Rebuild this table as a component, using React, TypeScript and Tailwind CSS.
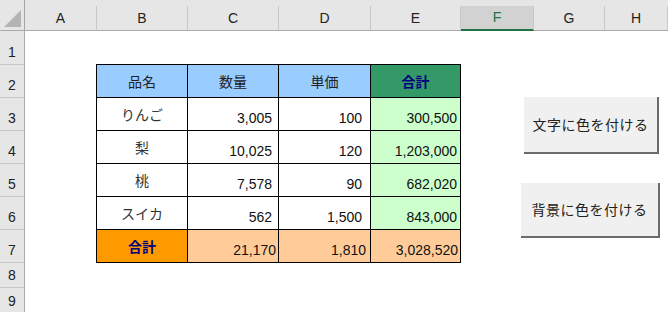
import React from "react";

const font = { fontFamily: '"Liberation Sans", "Noto Sans CJK JP", sans-serif' };

const columns = [
  { label: "A", w: "w-[72px]" },
  { label: "B", w: "w-[91px]" },
  { label: "C", w: "w-[91px]" },
  { label: "D", w: "w-[92px]" },
  { label: "E", w: "w-[90px]" },
  { label: "F", w: "w-[73px]", selected: true },
  { label: "G", w: "w-[71px]" },
  { label: "H", w: "flex-1" },
];

const rowHeights = [
  "h-[34px]",
  "h-[33px]",
  "h-[33px]",
  "h-[33px]",
  "h-[33px]",
  "h-[33px]",
  "h-[33px]",
  "h-[25px]",
  "h-[25px]",
];

const items = [
  { name: "りんご", qty: "3,005", price: "100", total: "300,500" },
  { name: "梨", qty: "10,025", price: "120", total: "1,203,000" },
  { name: "桃", qty: "7,578", price: "90", total: "682,020" },
  { name: "スイカ", qty: "562", price: "1,500", total: "843,000" },
];

const ColumnHeader = () => (
  <div className="flex h-[31px] bg-[#e6e6e6] border-b border-[#ababab]">
    <div className="relative w-[25px] shrink-0 border-r border-[#a6a6a6]">
      <svg className="absolute left-[4px] top-[10px]" width="18" height="18" viewBox="0 0 18 18">
        <polygon points="17,0 17,17 0,17" fill="#b4b4b4" />
      </svg>
    </div>
    {columns.map((c) => (
      <div key={c.label} className={`${c.w} shrink-0 flex flex-col`}>
        <div className="h-[6px]" />
        <div
          className={`flex-1 flex items-center justify-center text-[14px] border-r border-[#c8c8c8] ${
            c.selected ? "bg-[#d2d2d2] text-[#217346] border-b-2 border-b-[#217346] -mb-[1px]" : "text-[#222]"
          }`}
        >
          {c.label}
        </div>
      </div>
    ))}
  </div>
);

const RowHeader = () => (
  <div className="w-[25px] shrink-0 bg-[#e6e6e6] border-r border-[#ababab] flex flex-col">
    {rowHeights.map((h, i) => (
      <div
        key={i}
        className={`${h} shrink-0 flex items-end justify-center pb-[3px] text-[14px] leading-[17px] text-[#222] ${
          i < 8 ? "border-b border-[#c8c8c8]" : ""
        }`}
      >
        {i + 1}
      </div>
    ))}
  </div>
);

const NumCell = ({ value, w, pr, bg = "bg-white" }: { value: string; w: string; pr: string; bg?: string }) => (
  <div className={`${w} ${bg} ${pr} h-full border-r border-black flex items-end justify-end pb-[4px] leading-[16px] text-[#111]`}>
    {value}
  </div>
);

const SheetTable = () => (
  <div className="ml-[71px] w-[365px] border-l border-t border-black text-[14px]">
    <div className="flex h-[33px] border-b border-black">
      {["品名", "数量", "単価"].map((t, i) => (
        <div
          key={t}
          className={`${i === 2 ? "w-[92px]" : "w-[91px]"} h-full bg-[#99ccff] border-r border-black flex items-center justify-center pt-[2px] text-[#222]`}
        >
          {t}
        </div>
      ))}
      <div className="w-[90px] h-full bg-[#339966] border-r border-black flex items-center justify-center pt-[2px] font-bold text-[#000080]">
        合計
      </div>
    </div>
    {items.map((it) => (
      <div key={it.name} className="flex h-[33px] border-b border-black">
        <div className="w-[91px] h-full border-r border-black flex items-center justify-center pt-[2px] text-[#333]">
          {it.name}
        </div>
        <NumCell value={it.qty} w="w-[91px]" pr="pr-[6px]" />
        <NumCell value={it.price} w="w-[92px]" pr="pr-[8px]" />
        <NumCell value={it.total} w="w-[90px]" pr="pr-[3px]" bg="bg-[#ccffcc]" />
      </div>
    ))}
    <div className="flex h-[33px] border-b border-black">
      <div className="w-[91px] h-full bg-[#ff9900] border-r border-black flex items-center justify-center pt-[2px] font-bold text-[#000080]">
        合計
      </div>
      <NumCell value="21,170" w="w-[91px]" pr="pr-[2px]" bg="bg-[#ffcc99]" />
      <NumCell value="1,810" w="w-[92px]" pr="pr-[4px]" bg="bg-[#ffcc99]" />
      <NumCell value="3,028,520" w="w-[90px]" pr="pr-[2px]" bg="bg-[#ffcc99]" />
    </div>
  </div>
);

const SheetButton = ({ label, className }: { label: string; className: string }) => (
  <div
    className={`absolute ${className} bg-[#f0f0f0] border-r-2 border-b-2 border-[#6b6b6b] flex items-center justify-center text-[14px] tracking-[0.5px] text-[#222]`}
    style={{ fontFamily: '"Noto Sans CJK JP", sans-serif' }}
  >
    {label}
  </div>
);

export default function App() {
  return (
    <div className="w-[668px] h-[312px] overflow-hidden bg-white flex flex-col" style={font}>
      <ColumnHeader />
      <div className="flex flex-1 min-h-0">
        <RowHeader />
        <div className="relative flex-1 flex flex-col">
          <div className="h-[33px] shrink-0" />
          <SheetTable />
          <SheetButton label="文字に色を付ける" className="left-[499px] top-[66px] w-[135px] h-[57px]" />
          <SheetButton label="背景に色を付ける" className="left-[496px] top-[152px] w-[139px] h-[55px]" />
        </div>
      </div>
    </div>
  );
}
